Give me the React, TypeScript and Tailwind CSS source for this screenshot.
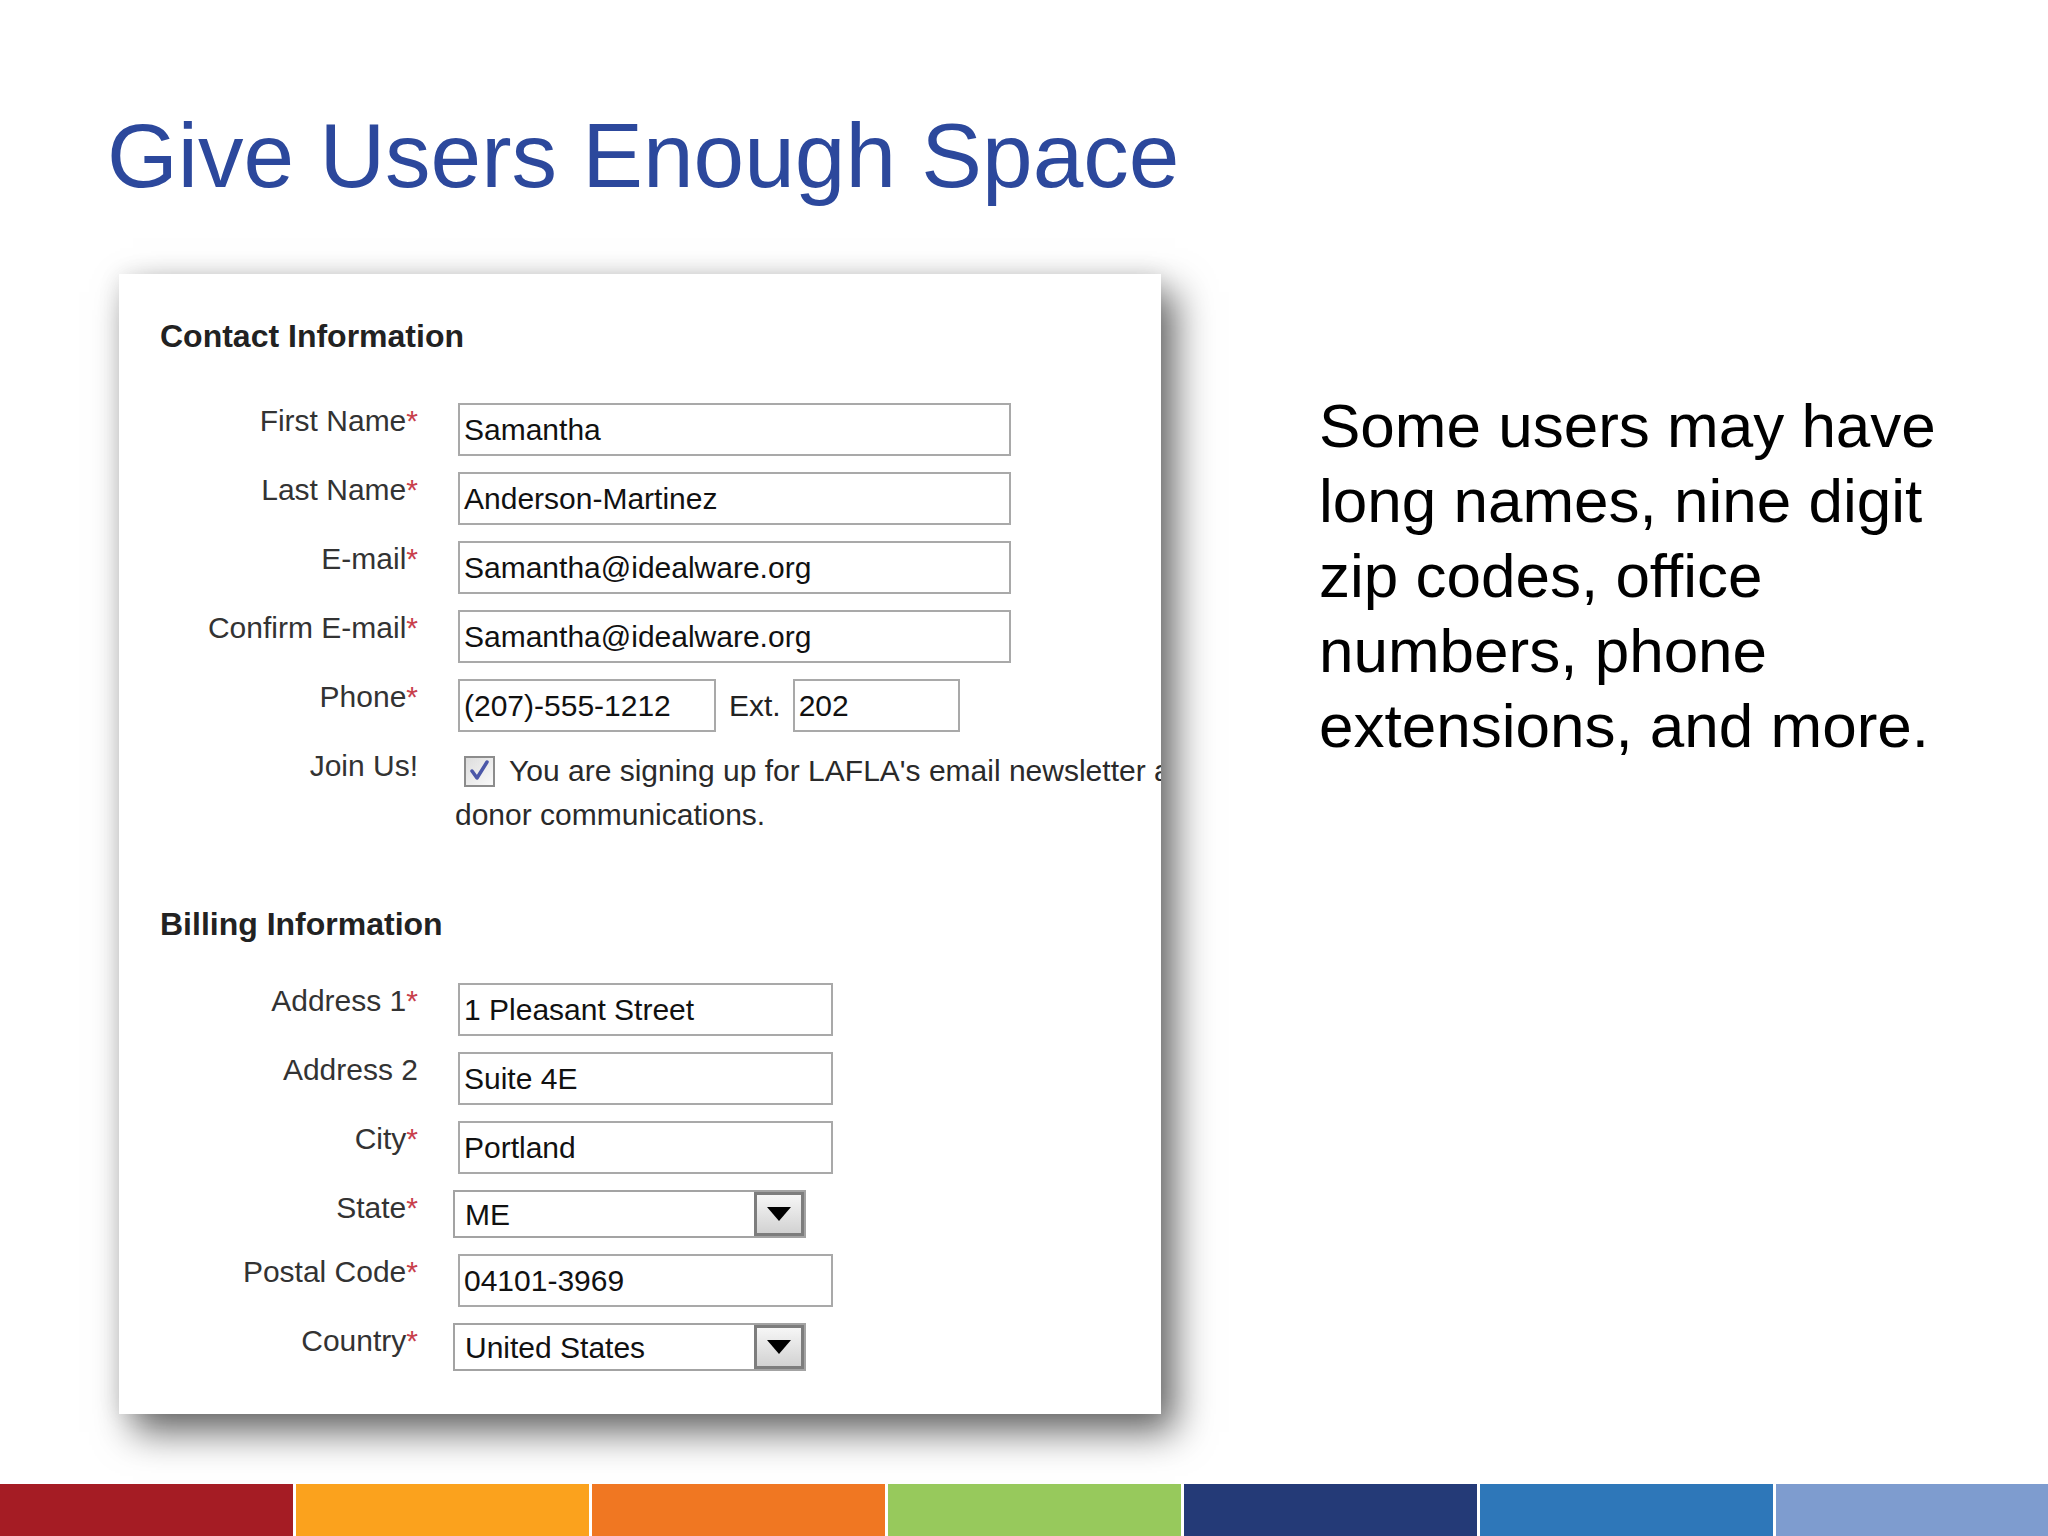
import React from "react";

const font = { fontFamily: '"Liberation Sans", Arial, sans-serif' };

interface FieldProps {
  label: string;
  required?: boolean;
  className?: string;
  children: React.ReactNode;
}

const Field = ({ label, required, className, children }: FieldProps) => (
  <div className={`flex items-start ${className ?? ""}`}>
    <div className="w-[258px] shrink-0 text-right text-[30px] leading-[36px] text-[#333]">
      {label}
      {required && <span className="text-[#c8404c]">*</span>}
    </div>
    <div className="ml-[40px] min-w-0">{children}</div>
  </div>
);

const TextBox = ({ value, width }: { value: string; width: string }) => (
  <div
    className={`flex h-[53px] shrink-0 items-center border-2 border-[#a9a9a9] bg-white pl-[4px] text-[30px] text-[#111] ${width}`}
  >
    {value}
  </div>
);

const SelectBox = ({ value }: { value: string }) => (
  <div className="-ml-[5px] flex h-[48px] w-[353px] items-stretch border-2 border-[#a3a3a3] bg-white">
    <div className="flex flex-1 items-center pl-[10px] text-[30px] text-[#111]">
      {value}
    </div>
    <div className="flex w-[50px] items-center justify-center border-[3px] border-[#7d7d7d] bg-linear-to-b from-[#f6f6f6] to-[#d2d2d2]">
      <svg width="24" height="14" viewBox="0 0 24 14">
        <polygon points="0,0 24,0 12,14" fill="#000" />
      </svg>
    </div>
  </div>
);

const CheckBox = () => (
  <svg width="31" height="31" viewBox="0 0 31 31" className="shrink-0">
    <defs>
      <linearGradient id="cb" x1="0" y1="0" x2="1" y2="1">
        <stop offset="0" stopColor="#dcdcdc" />
        <stop offset="1" stopColor="#fafafa" />
      </linearGradient>
    </defs>
    <rect x="1" y="1" width="29" height="29" fill="url(#cb)" stroke="#8c8c8c" strokeWidth="2" />
    <path
      d="M8 15 L13 22 L23 6"
      fill="none"
      stroke="#4b57a8"
      strokeWidth="3.5"
      strokeLinecap="round"
      strokeLinejoin="round"
    />
  </svg>
);

const bars = [
  "w-[293px] bg-[#a51c24]",
  "w-[293px] bg-[#fba21d]",
  "w-[293px] bg-[#f07722]",
  "w-[293px] bg-[#97c95c]",
  "w-[293px] bg-[#243a77]",
  "w-[293px] bg-[#2e77b9]",
  "flex-1 bg-[#7e9ccf]",
];

const App = () => {
  return (
    <div style={font} className="flex h-[1536px] w-[2048px] flex-col overflow-hidden bg-white">
      <h1 className="mt-[111px] pl-[107px] text-[91px] leading-[90px] font-normal text-[#2c489c]">
        Give Users Enough Space
      </h1>

      <div className="mt-[73px] flex pl-[119px]">
        <div className="h-[1140px] w-[1042px] shrink-0 overflow-hidden bg-white pt-[42px] pl-[41px] shadow-[14px_18px_36px_rgba(0,0,0,0.6),0_0_22px_rgba(0,0,0,0.08)]">
          <h2 className="text-[32px] leading-[40px] font-bold text-[#222]">
            Contact Information
          </h2>

          <div className="mt-[47px] flex flex-col gap-[16px]">
            <Field label="First Name" required>
              <TextBox value="Samantha" width="w-[553px]" />
            </Field>
            <Field label="Last Name" required>
              <TextBox value="Anderson-Martinez" width="w-[553px]" />
            </Field>
            <Field label="E-mail" required>
              <TextBox value="Samantha@idealware.org" width="w-[553px]" />
            </Field>
            <Field label="Confirm E-mail" required>
              <TextBox value="Samantha@idealware.org" width="w-[553px]" />
            </Field>
            <Field label="Phone" required>
              <div className="flex items-center">
                <TextBox value="(207)-555-1212" width="w-[258px]" />
                <span className="ml-[13px] text-[30px] text-[#222]">Ext.</span>
                <div className="ml-[12px]">
                  <TextBox value="202" width="w-[167px]" />
                </div>
              </div>
            </Field>
            <Field label="Join Us!">
              <div className="-ml-[3px] pt-[1px] text-[30px] leading-[44px] text-[#2a2a2a]">
                <div className="flex items-center whitespace-nowrap">
                  <span className="ml-[9px] flex">
                    <CheckBox />
                  </span>
                  <span className="ml-[14px]">
                    You are signing up for LAFLA&apos;s email newsletter and other
                  </span>
                </div>
                <div>donor communications.</div>
              </div>
            </Field>
          </div>

          <h2 className="mt-[67px] text-[32px] leading-[40px] font-bold text-[#222]">
            Billing Information
          </h2>

          <div className="mt-[39px] flex flex-col gap-[16px]">
            <Field label="Address 1" required>
              <TextBox value="1 Pleasant Street" width="w-[375px]" />
            </Field>
            <Field label="Address 2">
              <TextBox value="Suite 4E" width="w-[375px]" />
            </Field>
            <Field label="City" required>
              <TextBox value="Portland" width="w-[375px]" />
            </Field>
            <Field label="State" required>
              <SelectBox value="ME" />
            </Field>
            <Field label="Postal Code" required>
              <TextBox value="04101-3969" width="w-[375px]" />
            </Field>
            <Field label="Country" required>
              <SelectBox value="United States" />
            </Field>
          </div>
        </div>

        <p className="mt-[114px] ml-[158px] text-[62px] leading-[75px] text-black">
          Some users may have
          <br />
          long names, nine digit
          <br />
          zip codes, office
          <br />
          numbers, phone
          <br />
          extensions, and more.
        </p>
      </div>

      <div className="mt-auto flex h-[52px] gap-[3px] bg-white">
        {bars.map((c) => (
          <div key={c} className={c} />
        ))}
      </div>
    </div>
  );
};

export default App;
